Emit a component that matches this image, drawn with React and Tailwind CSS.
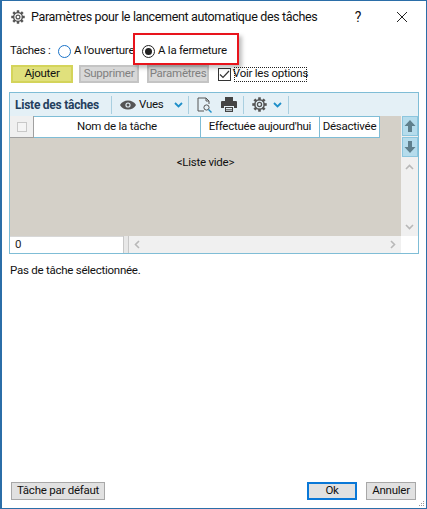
import React from 'react'

const GearIcon = ({ size = 14, color = '#555' }) => (
    <svg width={size} height={size} viewBox="0 0 16 16" className="shrink-0">
        <g fill={color}>
            {[0, 45, 90, 135, 180, 225, 270, 315].map((a) => (
                <rect key={a} x="6.6" y="0.3" width="2.8" height="3.2" transform={`rotate(${a} 8 8)`} />
            ))}
        </g>
        <circle cx="8" cy="8" r="5" fill="none" stroke={color} strokeWidth="1.6" />
        <circle cx="8" cy="8" r="2.2" fill="none" stroke={color} strokeWidth="1.4" />
    </svg>
)

const Chevron = () => (
    <svg width="9" height="6" viewBox="0 0 9 6" className="shrink-0">
        <path d="M1 1l3.5 3.5L8 1" fill="none" stroke="#1f8fc9" strokeWidth="1.8" />
    </svg>
)

const Sep = () => <div className="w-px h-[18px] bg-[#a9cfe0] shrink-0" />

const ArrowBtn = ({ down }) => (
    <div className="w-[16px] h-[20px] bg-[#b5dcec] border border-[#8cc6de] flex items-center justify-center mb-px shrink-0">
        <svg width="12" height="14" viewBox="0 0 12 14">
            <path d={down ? 'M4 1h4v6h3.5L6 13 .5 7H4z' : 'M4 13h4V7h3.5L6 1 .5 7H4z'} fill="#5f7f8c" />
        </svg>
    </div>
)

const Btn = ({ children, className }) => (
    <div className={`h-[18px] flex items-center justify-center shrink-0 whitespace-nowrap ${className}`}>{children}</div>
)

export default function App() {
    return (
        <div
            className="relative w-[427px] h-[509px] bg-white border-l-2 border-r border-y border-[#2b6ea8] flex flex-col text-[11.5px] tracking-[-0.25px] leading-none text-[#111] overflow-hidden"
            style={{ fontFamily: 'Roboto, "Liberation Sans", sans-serif' }}
        >
            {/* title bar */}
            <div className="h-[30px] pt-[2px] flex items-center pl-[9px] shrink-0">
                <GearIcon size={14} />
                <span className="ml-[6px] text-[12.5px] tracking-[-0.35px] whitespace-nowrap">Paramètres pour le lancement automatique des tâches</span>
                <span className="ml-auto mr-[35px] text-[14px]">?</span>
                <svg width="12" height="12" viewBox="0 0 12 12" className="mr-[18px]">
                    <path d="M1 1l10 10M11 1L1 11" stroke="#222" strokeWidth="1" />
                </svg>
            </div>

            {/* tasks row */}
            <div className="h-[18px] mt-[11px] flex items-center pl-[8px] shrink-0">
                <span className="w-[42px] whitespace-nowrap">Tâches :</span>
                <span className="ml-[6px] w-[13px] h-[13px] rounded-full border border-[#1a73c8] shrink-0" />
                <span className="ml-[3px] w-[58px] whitespace-nowrap">A l'ouverture</span>
                <span className="ml-[10px] w-[13px] h-[13px] rounded-full border border-[#222] flex items-center justify-center shrink-0">
                    <span className="w-[7px] h-[7px] rounded-full bg-[#222]" />
                </span>
                <span className="ml-[3px] whitespace-nowrap">A la fermeture</span>
            </div>

            {/* buttons */}
            <div className="mt-[5px] h-[18px] flex items-center pl-[9px] shrink-0">
                <Btn className="w-[62px] bg-[#e0e07c] border-2 border-[#d4d45a]">Ajouter</Btn>
                <Btn className="ml-[6px] w-[60px] bg-[#d8d8d8] border-2 border-[#c4c4c4] text-[#808080]">Supprimer</Btn>
                <Btn className="ml-[8px] w-[62px] bg-[#d8d8d8] border-2 border-[#c4c4c4] text-[#808080]">Paramètres</Btn>
                <span className="ml-[9px] w-[13px] h-[13px] border border-[#333] flex items-center justify-center shrink-0">
                    <svg width="11" height="9" viewBox="0 0 11 9">
                        <path d="M1 4.5l3 3 6-6.5" fill="none" stroke="#333" strokeWidth="1.2" />
                    </svg>
                </span>
                <span className="ml-[3px] w-[73px] justify-center h-[15px] flex items-center border border-dotted border-[#222] whitespace-nowrap">Voir les options</span>
            </div>

            {/* task list panel */}
            <div className="mt-[9px] ml-[7px] w-[410px] h-[162px] border border-[#7fbdd6] flex flex-col shrink-0">
                <div className="h-[23px] bg-[#e4f0f6] flex items-center shrink-0">
                    <span className="ml-[5px] w-[92px] font-bold text-[12px] text-[#24405e] whitespace-nowrap">Liste des tâches</span>
                    <div className="ml-[4px]"><Sep /></div>
                    <svg width="16" height="10" viewBox="0 0 16 10" className="ml-[8px] shrink-0">
                        <path d="M0 5c3-6 13-6 16 0-3 6-13 6-16 0z" fill="#555" />
                        <circle cx="8" cy="5" r="2.6" fill="#e4f0f6" />
                        <circle cx="8" cy="5" r="1.5" fill="#555" />
                    </svg>
                    <span className="ml-[3px] w-[24px]">Vues</span>
                    <div className="ml-[11px]"><Chevron /></div>
                    <div className="ml-[5px]"><Sep /></div>
                    <svg width="16" height="16" viewBox="0 0 16 16" className="ml-[7px] shrink-0">
                        <path d="M10 1H2v13h6M10 1l3 3v3M10 1v3h3" fill="none" stroke="#555" />
                        <circle cx="10.5" cy="10.5" r="2.6" fill="#e4f0f6" stroke="#555" />
                        <path d="M12.5 12.5l3 3" stroke="#1f8fc9" strokeWidth="1.4" />
                    </svg>
                    <svg width="16" height="15" viewBox="0 0 16 15" className="ml-[9px] shrink-0">
                        <path d="M4 0h8v4H4z" fill="#444" />
                        <path d="M1 4h14a1 1 0 0 1 1 1v6h-3v-2H3v2H0V5a1 1 0 0 1 1-1z" fill="#444" />
                        <path d="M4 10h8v5H4z" fill="#444" />
                        <path d="M5 11.5h6M5 13.2h6" stroke="#e4f0f6" />
                    </svg>
                    <div className="ml-[6px]"><Sep /></div>
                    <div className="ml-[8px]"><GearIcon size={15} /></div>
                    <div className="ml-[6px]"><Chevron /></div>
                    <div className="ml-[6px]"><Sep /></div>
                </div>

                <div className="flex-1 flex min-h-0">
                    <div className="w-[391px] flex flex-col">
                        <div className="h-[22px] flex bg-[#d4d0c8] shrink-0">
                            <div className="w-[24px] bg-[#f0f0f0] border-r border-b border-[#a0a0a0] flex items-center justify-center">
                                <span className="w-[10px] h-[10px] border border-[#c8c8c8] bg-[#f4f4f4]" />
                            </div>
                            <div className="w-[167px] bg-white border-t border-r border-b border-[#7fbdd6] flex items-center justify-center">Nom de la tâche</div>
                            <div className="w-[119px] bg-white border-t border-r border-b border-[#7fbdd6] flex items-center justify-center whitespace-nowrap">Effectuée aujourd'hui</div>
                            <div className="w-[60px] bg-white border-t border-r border-b border-[#7fbdd6] flex items-center justify-center">Désactivée</div>
                        </div>
                        <div className="flex-1 bg-[#d4d0c8] flex justify-center pt-[19px]">&lt;Liste vide&gt;</div>
                        <div className="h-[17px] flex shrink-0 bg-[#f0f0f0]">
                            <div className="w-[113px] bg-white flex items-center pl-[5px] text-[#222] border-t border-[#d8d8d8]">0</div>
                            <div className="w-[6px] bg-[#e8e8e8] border-x border-[#c8c8c8]" />
                            <div className="flex-1 flex items-center justify-between px-[5px]">
                                <svg width="6" height="9" viewBox="0 0 6 9"><path d="M5 1L1.5 4.5 5 8" fill="none" stroke="#b8b8b8" strokeWidth="1.6" /></svg>
                                <svg width="6" height="9" viewBox="0 0 6 9"><path d="M1 1l3.5 3.5L1 8" fill="none" stroke="#b8b8b8" strokeWidth="1.6" /></svg>
                            </div>
                        </div>
                    </div>
                    <div className="flex-1 flex flex-col">
                        <div className="flex-1 bg-[#f0f0f0] flex flex-col items-center min-h-0">
                            <ArrowBtn />
                            <ArrowBtn down />
                            <svg width="9" height="6" viewBox="0 0 9 6" className="mt-[6px]"><path d="M1 5l3.5-3.5L8 5" fill="none" stroke="#b8b8b8" strokeWidth="1.6" /></svg>
                            <svg width="9" height="6" viewBox="0 0 9 6" className="mt-auto mb-[6px]"><path d="M1 1l3.5 3.5L8 1" fill="none" stroke="#b8b8b8" strokeWidth="1.6" /></svg>
                        </div>
                        <div className="h-[17px] bg-white shrink-0" />
                    </div>
                </div>
            </div>

            <div className="mt-[11px] ml-[8px]">Pas de tâche sélectionnée.</div>

            {/* footer buttons */}
            <div className="mt-auto mb-[8px] flex items-center pl-[9px] pr-[10px]">
                <Btn className="w-[94px] bg-[#e1e1e1] border border-[#a8a8a8]">Tâche par défaut</Btn>
                <Btn className="ml-auto w-[50px] bg-[#e1e1e1] border-2 border-[#0a78d7]">Ok</Btn>
                <Btn className="ml-[9px] w-[50px] bg-[#e1e1e1] border border-[#a8a8a8]">Annuler</Btn>
            </div>

            {/* resize grip */}
            <svg width="8" height="8" viewBox="0 0 8 8" className="absolute right-0 bottom-0">
                <path d="M5 1h1v1H5zM3 3h1v1H3zM5 3h1v1H5zM1 5h1v1H1zM3 5h1v1H3zM5 5h1v1H5z" fill="#9a9a9a" />
            </svg>

            {/* screenshot annotation */}
            <div className="absolute left-[131px] top-[32px] w-[106px] h-[32px] border-2 border-[#e8141c] shadow-[3px_3px_4px_rgba(0,0,0,0.25)]" />
        </div>
    )
}
